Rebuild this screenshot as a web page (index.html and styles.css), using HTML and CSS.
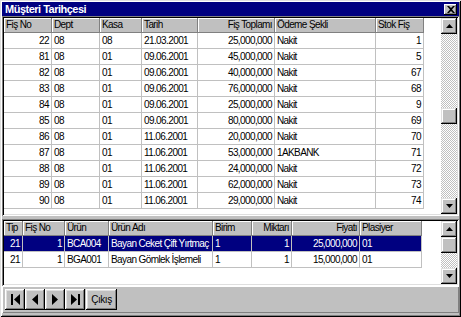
FILE: index.html
```html
<!DOCTYPE html>
<html lang="tr">
<head>
  <meta charset="UTF-8" />
  <title>Müşteri Tarihçesi</title>
  <link rel="stylesheet" href="styles.css">
</head>
<body>

  <div class="window">
    <div class="titlebar">
      <span class="title">Müşteri Tarihçesi</span>
      <span class="close-btn">
        <svg width="8" height="7" viewBox="0 0 8 7"><path d="M0 0h2l2 2 2-2h2L5 3.5 8 7H6L4 5 2 7H0l3-3.5z" fill="#000"/></svg>
      </span>
    </div>

    <!-- Fiş listesi -->
    <div class="grid grid-top">
      <div class="grid-body">
        <table class="table">
          <colgroup>
            <col style="width:48px"><col style="width:48px"><col style="width:42px"><col style="width:56px">
            <col style="width:77px"><col style="width:101px"><col style="width:48px">
          </colgroup>
          <thead>
            <tr>
              <th>Fiş No</th><th>Dept</th><th>Kasa</th><th>Tarih</th>
              <th class="num">Fiş Toplamı</th><th>Ödeme Şekli</th><th>Stok Fiş</th>
            </tr>
          </thead>
          <tbody>
            <tr><td class="num">22</td><td>08</td><td>08</td><td>21.03.2001</td><td class="num">25,000,000</td><td>Nakit</td><td class="num">1</td></tr>
            <tr><td class="num">81</td><td>08</td><td>01</td><td>09.06.2001</td><td class="num">45,000,000</td><td>Nakit</td><td class="num">5</td></tr>
            <tr><td class="num">82</td><td>08</td><td>01</td><td>09.06.2001</td><td class="num">40,000,000</td><td>Nakit</td><td class="num">67</td></tr>
            <tr><td class="num">83</td><td>08</td><td>01</td><td>09.06.2001</td><td class="num">76,000,000</td><td>Nakit</td><td class="num">68</td></tr>
            <tr><td class="num">84</td><td>08</td><td>01</td><td>09.06.2001</td><td class="num">25,000,000</td><td>Nakit</td><td class="num">9</td></tr>
            <tr><td class="num">85</td><td>08</td><td>01</td><td>09.06.2001</td><td class="num">80,000,000</td><td>Nakit</td><td class="num">69</td></tr>
            <tr><td class="num">86</td><td>08</td><td>01</td><td>11.06.2001</td><td class="num">20,000,000</td><td>Nakit</td><td class="num">70</td></tr>
            <tr><td class="num">87</td><td>08</td><td>01</td><td>11.06.2001</td><td class="num">53,000,000</td><td>1AKBANK</td><td class="num">71</td></tr>
            <tr><td class="num">88</td><td>08</td><td>01</td><td>11.06.2001</td><td class="num">24,000,000</td><td>Nakit</td><td class="num">72</td></tr>
            <tr><td class="num">89</td><td>08</td><td>01</td><td>11.06.2001</td><td class="num">62,000,000</td><td>Nakit</td><td class="num">73</td></tr>
            <tr><td class="num">90</td><td>08</td><td>01</td><td>11.06.2001</td><td class="num">29,000,000</td><td>Nakit</td><td class="num">74</td></tr>
          </tbody>
        </table>
      </div>
      <div class="vscroll">
        <span class="sb-btn"><svg width="7" height="4" viewBox="0 0 7 4"><path d="M3.5 0L7 4H0z" fill="#000"/></svg></span>
        <span class="sb-track"></span>
        <span class="sb-thumb"></span>
        <span class="sb-track"></span>
        <span class="sb-btn"><svg width="7" height="4" viewBox="0 0 7 4"><path d="M0 0h7L3.5 4z" fill="#000"/></svg></span>
      </div>
    </div>

    <!-- Fiş detayı -->
    <div class="grid grid-bottom">
      <div class="grid-body">
        <table class="table">
          <colgroup>
            <col style="width:19px"><col style="width:42px"><col style="width:44px"><col style="width:104px">
            <col style="width:39px"><col style="width:40px"><col style="width:68px"><col style="width:62px">
          </colgroup>
          <thead>
            <tr>
              <th>Tip</th><th>Fiş No</th><th>Ürün</th><th>Ürün Adı</th>
              <th>Birim</th><th class="num">Miktarı</th><th class="num">Fiyatı</th><th>Plasiyer</th>
            </tr>
          </thead>
          <tbody>
            <tr class="selected"><td class="num">21</td><td class="num">1</td><td>BCA004</td><td>Bayan Ceket Çift Yırtmaç</td><td>1</td><td class="num">1</td><td class="num">25,000,000</td><td>01</td></tr>
            <tr><td class="num">21</td><td class="num">1</td><td>BGA001</td><td>Bayan Gömlek İşlemeli</td><td>1</td><td class="num">1</td><td class="num">15,000,000</td><td>01</td></tr>
          </tbody>
        </table>
      </div>
      <div class="vscroll">
        <span class="sb-btn"><svg width="7" height="4" viewBox="0 0 7 4"><path d="M3.5 0L7 4H0z" fill="#000"/></svg></span>
        <span class="sb-thumb"></span>
        <span class="sb-track"></span>
        <span class="sb-btn"><svg width="7" height="4" viewBox="0 0 7 4"><path d="M0 0h7L3.5 4z" fill="#000"/></svg></span>
      </div>
    </div>

    <!-- Navigator -->
    <div class="toolbar">
      <button class="btn nav-btn" title="İlk">
        <svg width="9" height="11" viewBox="0 0 9 11"><path d="M0 0h2v11H0zM9 0v11L3 5.5z" fill="#000"/></svg>
      </button>
      <button class="btn nav-btn" title="Önceki">
        <svg width="6" height="11" viewBox="0 0 6 11"><path d="M6 0v11L0 5.5z" fill="#000"/></svg>
      </button>
      <button class="btn nav-btn" title="Sonraki">
        <svg width="6" height="11" viewBox="0 0 6 11"><path d="M0 0v11l6-5.5z" fill="#000"/></svg>
      </button>
      <button class="btn nav-btn" title="Son">
        <svg width="9" height="11" viewBox="0 0 9 11"><path d="M0 0v11l6-5.5zM7 0h2v11H7z" fill="#000"/></svg>
      </button>
      <button class="btn exit-btn">Çıkış</button>
    </div>
  </div>

</body>
</html>
```

FILE: styles.css
```css
* {
  margin: 0;
  padding: 0;
  box-sizing: border-box;
}

body {
  background: #c0c0c0;
  font-family: "Liberation Sans", Arial, sans-serif;
  font-size: 10px;
  letter-spacing: -0.6px;
  color: #000;
}

.window {
  width: 461px;
  height: 317px;
  padding: 2px 2px 4px;
  background: #c0c0c0;
  display: flex;
  flex-direction: column;
  box-shadow: inset 1px 1px #dfdfdf, inset -1px -1px #000,
              inset 2px 2px #fff, inset -2px -2px #808080;
}

.titlebar {
  height: 14px;
  flex: none;
  background: #000080;
  color: #fff;
  display: flex;
  align-items: center;
  justify-content: space-between;
  padding: 0 2px 0 3px;
}

.title {
  font-size: 11px;
  font-weight: bold;
  letter-spacing: -0.5px;
}

.close-btn {
  width: 13px;
  height: 11px;
  background: #c0c0c0;
  display: flex;
  align-items: center;
  justify-content: center;
  box-shadow: inset -1px -1px #000, inset 1px 1px #fff, inset -2px -2px #808080;
}

/* sunken grid frame */
.grid {
  flex: none;
  display: flex;
  padding: 2px;
  background: #fff;
  box-shadow: inset 1px 1px #808080, inset -1px -1px #fff,
              inset 2px 2px #000, inset -2px -2px #dfdfdf;
}

.grid-top { height: 200px; }

.grid-bottom {
  height: 67px;
  margin-top: 3px;
}

.grid-body {
  flex: 1;
  background: #fff;
  overflow: hidden;
}

.table {
  table-layout: fixed;
  border-collapse: separate;
  border-spacing: 0;
}

.table th,
.table td {
  white-space: nowrap;
  overflow: hidden;
  padding: 0 2px;
  text-align: left;
  font-weight: normal;
}

.table th {
  height: 15px;
  line-height: 14px;
  background: #c0c0c0;
  border-right: 1px solid #808080;
  border-bottom: 1px solid #808080;
  box-shadow: inset 1px 1px #fff;
}

.table td {
  height: 16px;
  line-height: 15px;
  border-right: 1px solid #c0c0c0;
  border-bottom: 1px solid #c0c0c0;
}

.table .num { text-align: right; }

.table tr.selected td {
  background: #000080;
  color: #fff;
}

/* scrollbar */
.vscroll {
  width: 16px;
  flex: none;
  display: flex;
  flex-direction: column;
}

.sb-btn,
.sb-thumb {
  height: 16px;
  flex: none;
  background: #c0c0c0;
  display: flex;
  align-items: center;
  justify-content: center;
  box-shadow: inset -1px -1px #000, inset 1px 1px #dfdfdf,
              inset -2px -2px #808080, inset 2px 2px #fff;
}

.sb-track {
  flex: 1;
  background: repeating-conic-gradient(#c0c0c0 0 25%, #fff 0 50%) 0 0 / 2px 2px;
}

/* navigator */
.toolbar {
  flex: 1;
  display: flex;
  align-items: flex-start;
  padding: 3px 0 0 3px;
  box-shadow: inset 1px 1px #fff, inset -1px -1px #808080;
}

.btn {
  height: 21px;
  background: #c0c0c0;
  border: none;
  font-family: inherit;
  font-size: 10px;
  letter-spacing: -0.5px;
  color: #000;
  display: flex;
  align-items: center;
  justify-content: center;
  box-shadow: inset -1px -1px #000, inset 1px 1px #fff,
              inset -2px -2px #808080, inset 2px 2px #dfdfdf;
}

.nav-btn { width: 20px; }

.exit-btn {
  width: 31px;
  margin-left: 1px;
}
```
